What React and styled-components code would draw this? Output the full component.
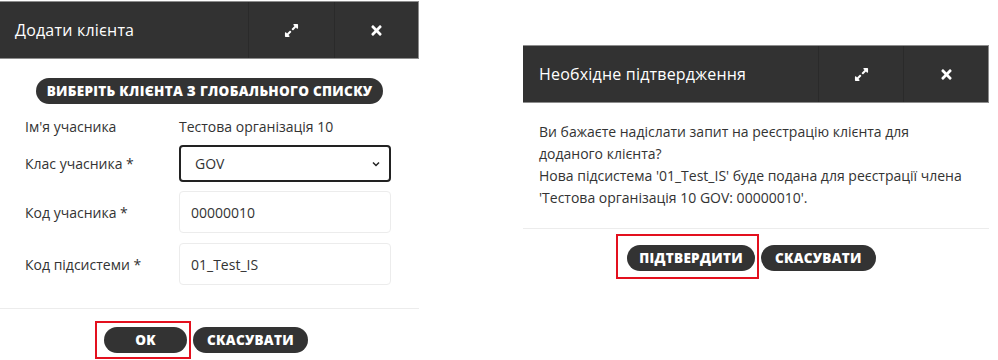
import React from "react";
import styled, { createGlobalStyle } from "styled-components";
import { FaExpandAlt, FaTimes } from "react-icons/fa";

const GlobalStyle = createGlobalStyle`
  body {
    margin: 0;
    background: #fff;
    font-family: "Open Sans", "Liberation Sans", sans-serif;
    color: #333;
  }
`;

const Page = styled.div`
  display: flex;
  align-items: flex-start;
  width: 998px;
  height: 360px;
  overflow: hidden;
  padding-top: 1px;
  box-sizing: border-box;
`;

const Dialog = styled.div`
  width: ${(p) => p.width}px;
  margin-left: ${(p) => p.left || 0}px;
  margin-top: ${(p) => p.top || 0}px;
  background: #fff;
`;

const Header = styled.div`
  display: flex;
  height: 56px;
  background: #323232;
  border: 1px solid #8d8d8d;
  border-left: none;
  color: #fff;
`;

const Title = styled.div`
  flex: 1;
  display: flex;
  align-items: center;
  padding-left: ${(p) => p.pad}px;
  font-size: 16px;
  letter-spacing: 0.2px;
`;

const HeaderButton = styled.div`
  width: ${(p) => p.w}px;
  display: flex;
  align-items: center;
  justify-content: center;
  border-left: 1px solid #2a2a2a;
  font-size: ${(p) => p.size}px;
`;

const Body = styled.div`
  padding: ${(p) => p.pad};
`;

const PillButton = styled.button`
  height: 26px;
  padding: 0 ${(p) => p.px}px;
  border: none;
  border-radius: 13px;
  background: #333;
  color: #fff;
  font-family: "Open Sans", "Liberation Sans", sans-serif;
  font-weight: 800;
  font-size: 13.5px;
  letter-spacing: 0.3px;
  min-width: ${(p) => p.minw || 0}px;
  cursor: pointer;
`;

const Center = styled.div`
  display: flex;
  justify-content: center;
`;

const Form = styled.div`
  padding-left: 25px;
`;

const FormRow = styled.div`
  display: grid;
  grid-template-columns: 154px 212px;
  align-items: center;
  margin-top: ${(p) => p.mt}px;
  font-size: 14px;
`;

const Label = styled.div`
  color: #333;
`;

const Value = styled.div`
  color: #333;
`;

const Field = styled.div`
  height: ${(p) => (p.select ? 37 : 42)}px;
  box-sizing: border-box;
  display: flex;
  align-items: center;
  justify-content: space-between;
  padding: 0 8px 0 ${(p) => (p.select ? 14 : 11)}px;
  border: ${(p) => (p.select ? "2px solid #222" : "1px solid #ececec")};
  border-radius: 4px;
  font-size: 14px;
  color: #333;
`;

const Divider = styled.div`
  height: 1px;
  background: #ececec;
  margin-top: ${(p) => p.mt}px;
`;

const Footer = styled.div`
  display: flex;
  justify-content: center;
  gap: 5px;
  padding-top: ${(p) => p.pt}px;
  padding-right: ${(p) => p.pr || 0}px;
`;

const Highlight = styled.div`
  border: 2px solid #e3101e;
  padding: ${(p) => p.pad};
  margin: ${(p) => p.m};
`;

const Offset = styled.div`
  padding-top: ${(p) => p.pt}px;
`;

const Text = styled.p`
  margin: 0;
  font-size: 14px;
  line-height: 22px;
  color: #333;
`;

function DialogHeader({ title, pad, expandW, closeW }) {
  return (
    <Header>
      <Title pad={pad}>{title}</Title>
      <HeaderButton w={expandW} size={15}>
        <FaExpandAlt />
      </HeaderButton>
      <HeaderButton w={closeW} size={15}>
        <FaTimes />
      </HeaderButton>
    </Header>
  );
}

function Chevron() {
  return (
    <svg width="10" height="10" viewBox="0 0 10 10">
      <path d="M2 3.5 L5 6.5 L8 3.5" fill="none" stroke="#222" strokeWidth="1.5" />
    </svg>
  );
}

export default function App() {
  return (
    <>
      <GlobalStyle />
      <Page>
        <Dialog width={419}>
          <DialogHeader title="Додати клієнта" pad={15} expandW={85} closeW={83} />
          <Body pad="19px 0 0 0">
            <Center>
              <PillButton px={11}>ВИБЕРІТЬ КЛІЄНТА З ГЛОБАЛЬНОГО СПИСКУ</PillButton>
            </Center>
            <Form>
              <FormRow mt={13}>
                <Label>Ім'я учасника</Label>
                <Value>Тестова організація 10</Value>
              </FormRow>
              <FormRow mt={9}>
                <Label>Клас учасника *</Label>
                <Field select>
                  GOV
                  <Chevron />
                </Field>
              </FormRow>
              <FormRow mt={9}>
                <Label>Код учасника *</Label>
                <Field>00000010</Field>
              </FormRow>
              <FormRow mt={10}>
                <Label>Код підсистеми *</Label>
                <Field>01_Test_IS</Field>
              </FormRow>
            </Form>
          </Body>
          <Divider mt={23} />
          <Footer pt={12} pr={16}>
            <Highlight pad="4px 2px 4px 7px" m="0 -3px 0 0">
              <PillButton px={0} minw={83}>OK</PillButton>
            </Highlight>
            <Offset pt={6}>
              <PillButton px={14}>СКАСУВАТИ</PillButton>
            </Offset>
          </Footer>
        </Dialog>
        <Dialog width={466} left={104} top={44}>
          <DialogHeader title="Необхідне підтвердження" pad={16} expandW={84} closeW={84} />
          <Body pad="18px 16px 0 16px">
            <Text>
              Ви бажаєте надіслати запит на реєстрацію клієнта для
              <br />
              доданого клієнта?
              <br />
              Нова підсистема '01_Test_IS' буде подана для реєстрації члена
              <br />
              'Тестова організація 10 GOV: 00000010'.
            </Text>
          </Body>
          <Divider mt={19} />
          <Footer pt={5} pr={20}>
            <Highlight pad="9px 2px 6px 9px" m="0 -3px 0 0">
              <PillButton px={12}>ПІДТВЕРДИТИ</PillButton>
            </Highlight>
            <Offset pt={11}>
              <PillButton px={14}>СКАСУВАТИ</PillButton>
            </Offset>
          </Footer>
        </Dialog>
      </Page>
    </>
  );
}
